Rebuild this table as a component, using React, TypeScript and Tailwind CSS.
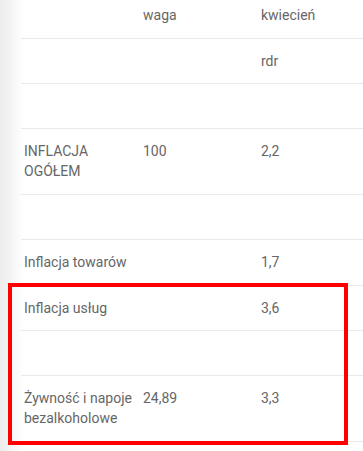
import React from "react";

type Row = { a?: string[]; b?: string; c?: string; h: string };

const rows: Row[] = [
  { a: ["INFLACJA", "OGÓŁEM"], b: "100", c: "2,2", h: "h-[66px]" },
  { h: "h-[45px]" },
  { a: ["Inflacja towarów"], c: "1,7", h: "h-[46px]" },
  { a: ["Inflacja usług"], c: "3,6", h: "h-[45px]" },
  { h: "h-[45px]" },
  { a: ["Żywność i napoje", "bezalkoholowe"], b: "24,89", c: "3,3", h: "h-[66px]" },
];

export default function App() {
  return (
    <div
      className="relative w-[363px] h-[451px] overflow-hidden bg-white text-[14px] leading-[20px] text-[#666]"
      style={{ fontFamily: "Roboto, 'Liberation Sans', sans-serif" }}
    >
      <div className="absolute inset-y-0 left-0 w-[24px] bg-gradient-to-r from-[#ececec] to-white" />
      <div className="relative ml-[21px] flex flex-col">
        <div className="grid grid-cols-[119px_118px_1fr] h-[39px] border-b border-[#e9e9e9] pt-[5px]">
          <div className="pl-[3px]" />
          <div className="pl-[3px]">waga</div>
          <div className="pl-[3px]">kwiecień</div>
        </div>
        <div className="grid grid-cols-[119px_118px_1fr] h-[45px] border-b border-[#e9e9e9] pt-[12px]">
          <div className="pl-[3px]" />
          <div className="pl-[3px]" />
          <div className="pl-[3px]">rdr</div>
        </div>
        <div className="h-[45px] border-b border-[#e9e9e9]" />
        {rows.map((r, i) => (
          <div
            key={i}
            className={`grid grid-cols-[119px_118px_1fr] ${r.h} border-b border-[#e9e9e9] pt-[12px]`}
          >
            <div className="pl-[3px]">
              {r.a?.map((t) => (
                <div key={t}>{t}</div>
              ))}
            </div>
            <div className="pl-[3px]">{r.b}</div>
            <div className="pl-[3px]">{r.c}</div>
          </div>
        ))}
      </div>
      <div className="absolute left-[8px] top-[283px] w-[340px] h-[162px] border-[4px] border-[#f00]" />
    </div>
  );
}
